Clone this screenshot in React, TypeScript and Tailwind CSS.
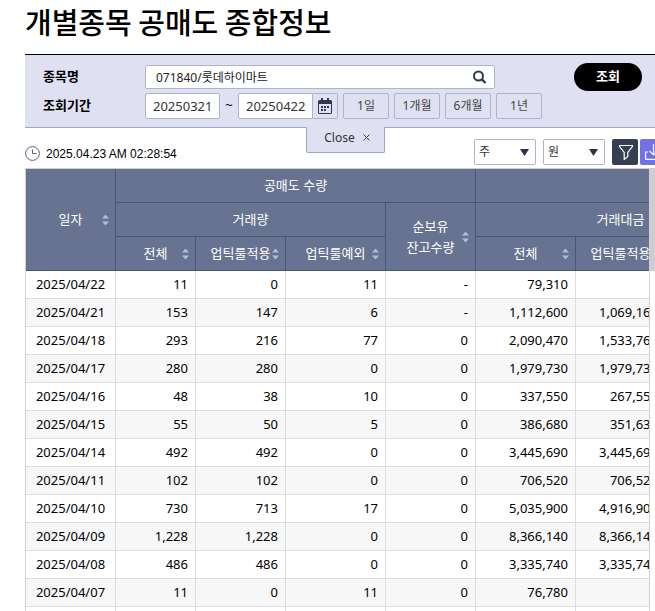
import { ReactNode } from "react";

const rows = [
  ["2025/04/22", "11", "0", "11", "-", "79,310", ""],
  ["2025/04/21", "153", "147", "6", "-", "1,112,600", "1,069,160"],
  ["2025/04/18", "293", "216", "77", "0", "2,090,470", "1,533,760"],
  ["2025/04/17", "280", "280", "0", "0", "1,979,730", "1,979,730"],
  ["2025/04/16", "48", "38", "10", "0", "337,550", "267,550"],
  ["2025/04/15", "55", "50", "5", "0", "386,680", "351,630"],
  ["2025/04/14", "492", "492", "0", "0", "3,445,690", "3,445,690"],
  ["2025/04/11", "102", "102", "0", "0", "706,520", "706,520"],
  ["2025/04/10", "730", "713", "17", "0", "5,035,900", "4,916,900"],
  ["2025/04/09", "1,228", "1,228", "0", "0", "8,366,140", "8,366,140"],
  ["2025/04/08", "486", "486", "0", "0", "3,335,740", "3,335,740"],
  ["2025/04/07", "11", "0", "11", "0", "76,780", ""],
  ["", "", "", "", "", "", ""],
];

const periods = ["1일", "1개월", "6개월", "1년"];

const SortIcon = () => (
  <svg
    className="absolute top-1/2 right-[6px] h-[11px] w-[7px] -translate-y-1/2"
    viewBox="0 0 7 11"
    fill="#a3c3dc"
  >
    <path d="M3.5 0L7 4H0zM3.5 11L7 7H0z" />
  </svg>
);

type HeadProps = {
  children?: ReactNode;
  sortable?: boolean;
  colSpan?: number;
  rowSpan?: number;
};

const Head = ({ children, sortable, colSpan, rowSpan }: HeadProps) => (
  <th
    colSpan={colSpan}
    rowSpan={rowSpan}
    className="relative h-[34px] border-r border-b border-[#475776] bg-[#677390] p-0 text-center font-normal whitespace-nowrap text-white"
  >
    {children}
    {sortable && <SortIcon />}
  </th>
);

const UnitSelect = ({ label, value }: { label: string; value: string }) => (
  <div className="relative">
    <select
      aria-label={label}
      defaultValue={value}
      className="block h-[26px] w-[62px] appearance-none rounded-xs border border-[#b0b4c8] bg-white pl-1 text-xs text-[#333]"
    >
      <option>{value}</option>
    </select>
    <svg
      className="pointer-events-none absolute top-[10px] right-[7px] h-[7px] w-[9px]"
      viewBox="0 0 9 7"
      fill="#2a3344"
    >
      <path d="M0 0h9L4.5 7z" />
    </svg>
  </div>
);

const SearchPanel = () => (
  <form className="relative border-t border-b border-t-black border-b-[#a0a5c8] bg-[#dfe1f3] pt-2 pr-[13px] pb-2 pl-[18px]">
    <div className="flex h-7 items-center">
      <label htmlFor="item" className="w-[102px] text-[13px] font-semibold">
        종목명
      </label>
      <div className="relative">
        <input
          id="item"
          defaultValue="071840/롯데하이마트"
          className="block h-6 w-[350px] rounded-xs border border-[#b0b4c8] bg-white pr-8 pl-[10px] text-xs text-[#222]"
        />
        <button
          type="button"
          aria-label="search"
          className="absolute top-[5px] right-2"
        >
          <svg
            className="size-[14px]"
            viewBox="0 0 14 14"
            fill="none"
            stroke="#2f3a4c"
            strokeWidth="2"
          >
            <circle cx="5.500" cy="6" r="4.500" />
            <path d="M8.700 9.200L12.500 13" strokeWidth="2.400" />
          </svg>
        </button>
      </div>
      <button
        type="submit"
        className="ml-auto h-7 w-[68px] rounded-full bg-black text-[13px] font-semibold text-white"
      >
        조회
      </button>
    </div>
    <div className="mt-[2px] flex h-[26px] items-center">
      <label htmlFor="from" className="w-[102px] text-[13px] font-semibold">
        조회기간
      </label>
      <input
        id="from"
        defaultValue="20250321"
        className="h-[26px] w-[75px] rounded-xs border border-[#b0b4c8] bg-white pl-[7px] text-[13px] text-[#333]"
      />
      <span className="w-[18px] text-center text-[13px]">~</span>
      <input
        aria-label="to"
        defaultValue="20250422"
        className="h-[26px] w-[75px] rounded-l-xs border border-[#b0b4c8] bg-white pl-[7px] text-[13px] text-[#333]"
      />
      <button
        type="button"
        aria-label="calendar"
        className="flex h-[26px] w-[25px] items-center justify-center rounded-r-xs border border-l-0 border-[#b0b4c8]"
      >
        <svg className="h-4 w-[14px]" viewBox="0 0 14 16">
          <path
            d="M3 0h2v2h4V0h2v2h1.500a1.500 1.500 0 0 1 1.500 1.500v11a1.500 1.500 0 0 1-1.500 1.500h-11A1.500 1.500 0 0 1 0 14.500v-11A1.500 1.500 0 0 1 1.500 2H3z"
            fill="#2f3a4c"
          />
          <path d="M1 6h12v8.500a.5.5 0 0 1-.5.5h-11a.5.5 0 0 1-.5-.5z" fill="#dfe1f3" />
          <path
            d="M6 8h2v2H6zM9 8h2v2H9zM3 8h2v2H3zM3 11h2v2H3zM6 11h2v2H6z"
            fill="#2f3a4c"
          />
        </svg>
      </button>
      <div className="ml-[5px] flex gap-[5px]">
        {periods.map((period) => (
          <button
            key={period}
            type="button"
            className="h-[26px] w-[46px] rounded-xs border border-[#b0b4c8] text-xs text-[#444]"
          >
            {period}
          </button>
        ))}
      </div>
    </div>
    <button
      type="button"
      className="absolute top-full left-[281px] flex h-[26px] w-[79px] items-center justify-center gap-2 rounded-b-xs border border-t-0 border-[#a0a5c8] bg-[#dfe1f3] pb-1 pl-[3px] text-xs text-[#333]"
    >
      Close
      <svg
        className="size-[7px]"
        viewBox="0 0 7 7"
        fill="none"
        stroke="#444"
        strokeWidth="1"
      >
        <path d="M.5.5l6 6M6.500.5l-6 6" />
      </svg>
    </button>
  </form>
);

const Toolbar = () => (
  <div className="mt-[11px] -mr-[11px] flex h-[29px] items-start">
    <svg
      className="mt-[7px] size-[15px]"
      viewBox="0 0 15 15"
      fill="none"
      stroke="#59647c"
    >
      <circle cx="7.500" cy="7.500" r="6.900" />
      <path d="M7.500 3.500v4h4" />
    </svg>
    <time className="mt-[7px] ml-[6px] font-['Liberation_Sans'] text-xs leading-4">
      2025.04.23 AM 02:28:54
    </time>
    <div className="ml-auto flex gap-[7px]">
      <UnitSelect label="quantity unit" value="주" />
      <UnitSelect label="currency unit" value="원" />
      <div className="flex gap-[2px]">
        <button
          type="button"
          aria-label="filter"
          className="flex size-[26px] items-center justify-center rounded-xs bg-[#353f52] pl-[2px]"
        >
          <svg
            className="h-4 w-[14px]"
            viewBox="0 0 14 16"
            fill="none"
            stroke="#fff"
            strokeWidth="1.200"
          >
            <path d="M.6 1.500h12.800v1L8.800 8.500v4L5.200 15.400V8.500L.6 2.500z" />
          </svg>
        </button>
        <button
          type="button"
          aria-label="download"
          className="flex size-[26px] items-center justify-center rounded-xs bg-[#7370e6]"
        >
          <svg
            className="size-4"
            viewBox="0 0 16 16"
            fill="none"
            stroke="#fff"
            strokeWidth="1.200"
          >
            <path d="M3 8H.6v7.400h14.800V8H13M8.500 0v11M4.500 7l4 4 4-4" />
          </svg>
        </button>
      </div>
    </div>
  </div>
);

const ShortSellingTable = () => (
  <div className="flex items-start">
    <div className="min-w-0 flex-1 overflow-hidden border border-[#d0d0d0]">
      <table className="w-[740px] table-fixed border-separate border-spacing-0 text-[13px] leading-[21px]">
        <colgroup>
          <col className="w-[90px]" />
          <col className="w-[80px]" />
          <col className="w-[90px]" />
          <col className="w-[100px]" />
          <col className="w-[90px]" />
          <col className="w-[100px]" />
          <col className="w-[90px]" />
          <col className="w-[100px]" />
        </colgroup>
        <thead>
          <tr>
            <Head rowSpan={3} sortable>
              일자
            </Head>
            <Head colSpan={4}>공매도 수량</Head>
            <Head colSpan={3} />
          </tr>
          <tr>
            <Head colSpan={3}>거래량</Head>
            <Head rowSpan={2} sortable>
              순보유
              <br />
              잔고수량
            </Head>
            <Head colSpan={3}>거래대금</Head>
          </tr>
          <tr>
            <Head sortable>전체</Head>
            <Head sortable>업틱룰적용</Head>
            <Head sortable>업틱룰예외</Head>
            <Head sortable>전체</Head>
            <Head sortable>업틱룰적용</Head>
            <Head />
          </tr>
        </thead>
        <tbody>
          {rows.map(([date, ...values]) => (
            <tr key={date} className="even:bg-[#f7f7f7]">
              <td className="h-7 border-r border-b border-[#ddd] p-0 text-center">
                {date}
              </td>
              {values.map((value, i) => (
                <td
                  key={i}
                  className="h-7 border-r border-b border-[#ddd] py-0 pr-[7px] pl-0 text-right"
                >
                  {value}
                </td>
              ))}
              <td className="border-b border-[#ddd] p-0" />
            </tr>
          ))}
        </tbody>
      </table>
    </div>
    <div className="h-[103px] w-[5px] bg-[#cdcdcd]" />
  </div>
);

const App = () => {
  return (
    <main className="h-screen overflow-hidden bg-white pl-[25px] font-['Noto_Sans','Noto_Sans_CJK_KR',sans-serif] text-black">
      <h1 className="h-[54px] font-['Noto_Sans_CJK_KR',sans-serif] text-[29px] leading-[42px] font-medium">
        개별종목 공매도 종합정보
      </h1>
      <SearchPanel />
      <Toolbar />
      <ShortSellingTable />
    </main>
  );
};

export default App;
